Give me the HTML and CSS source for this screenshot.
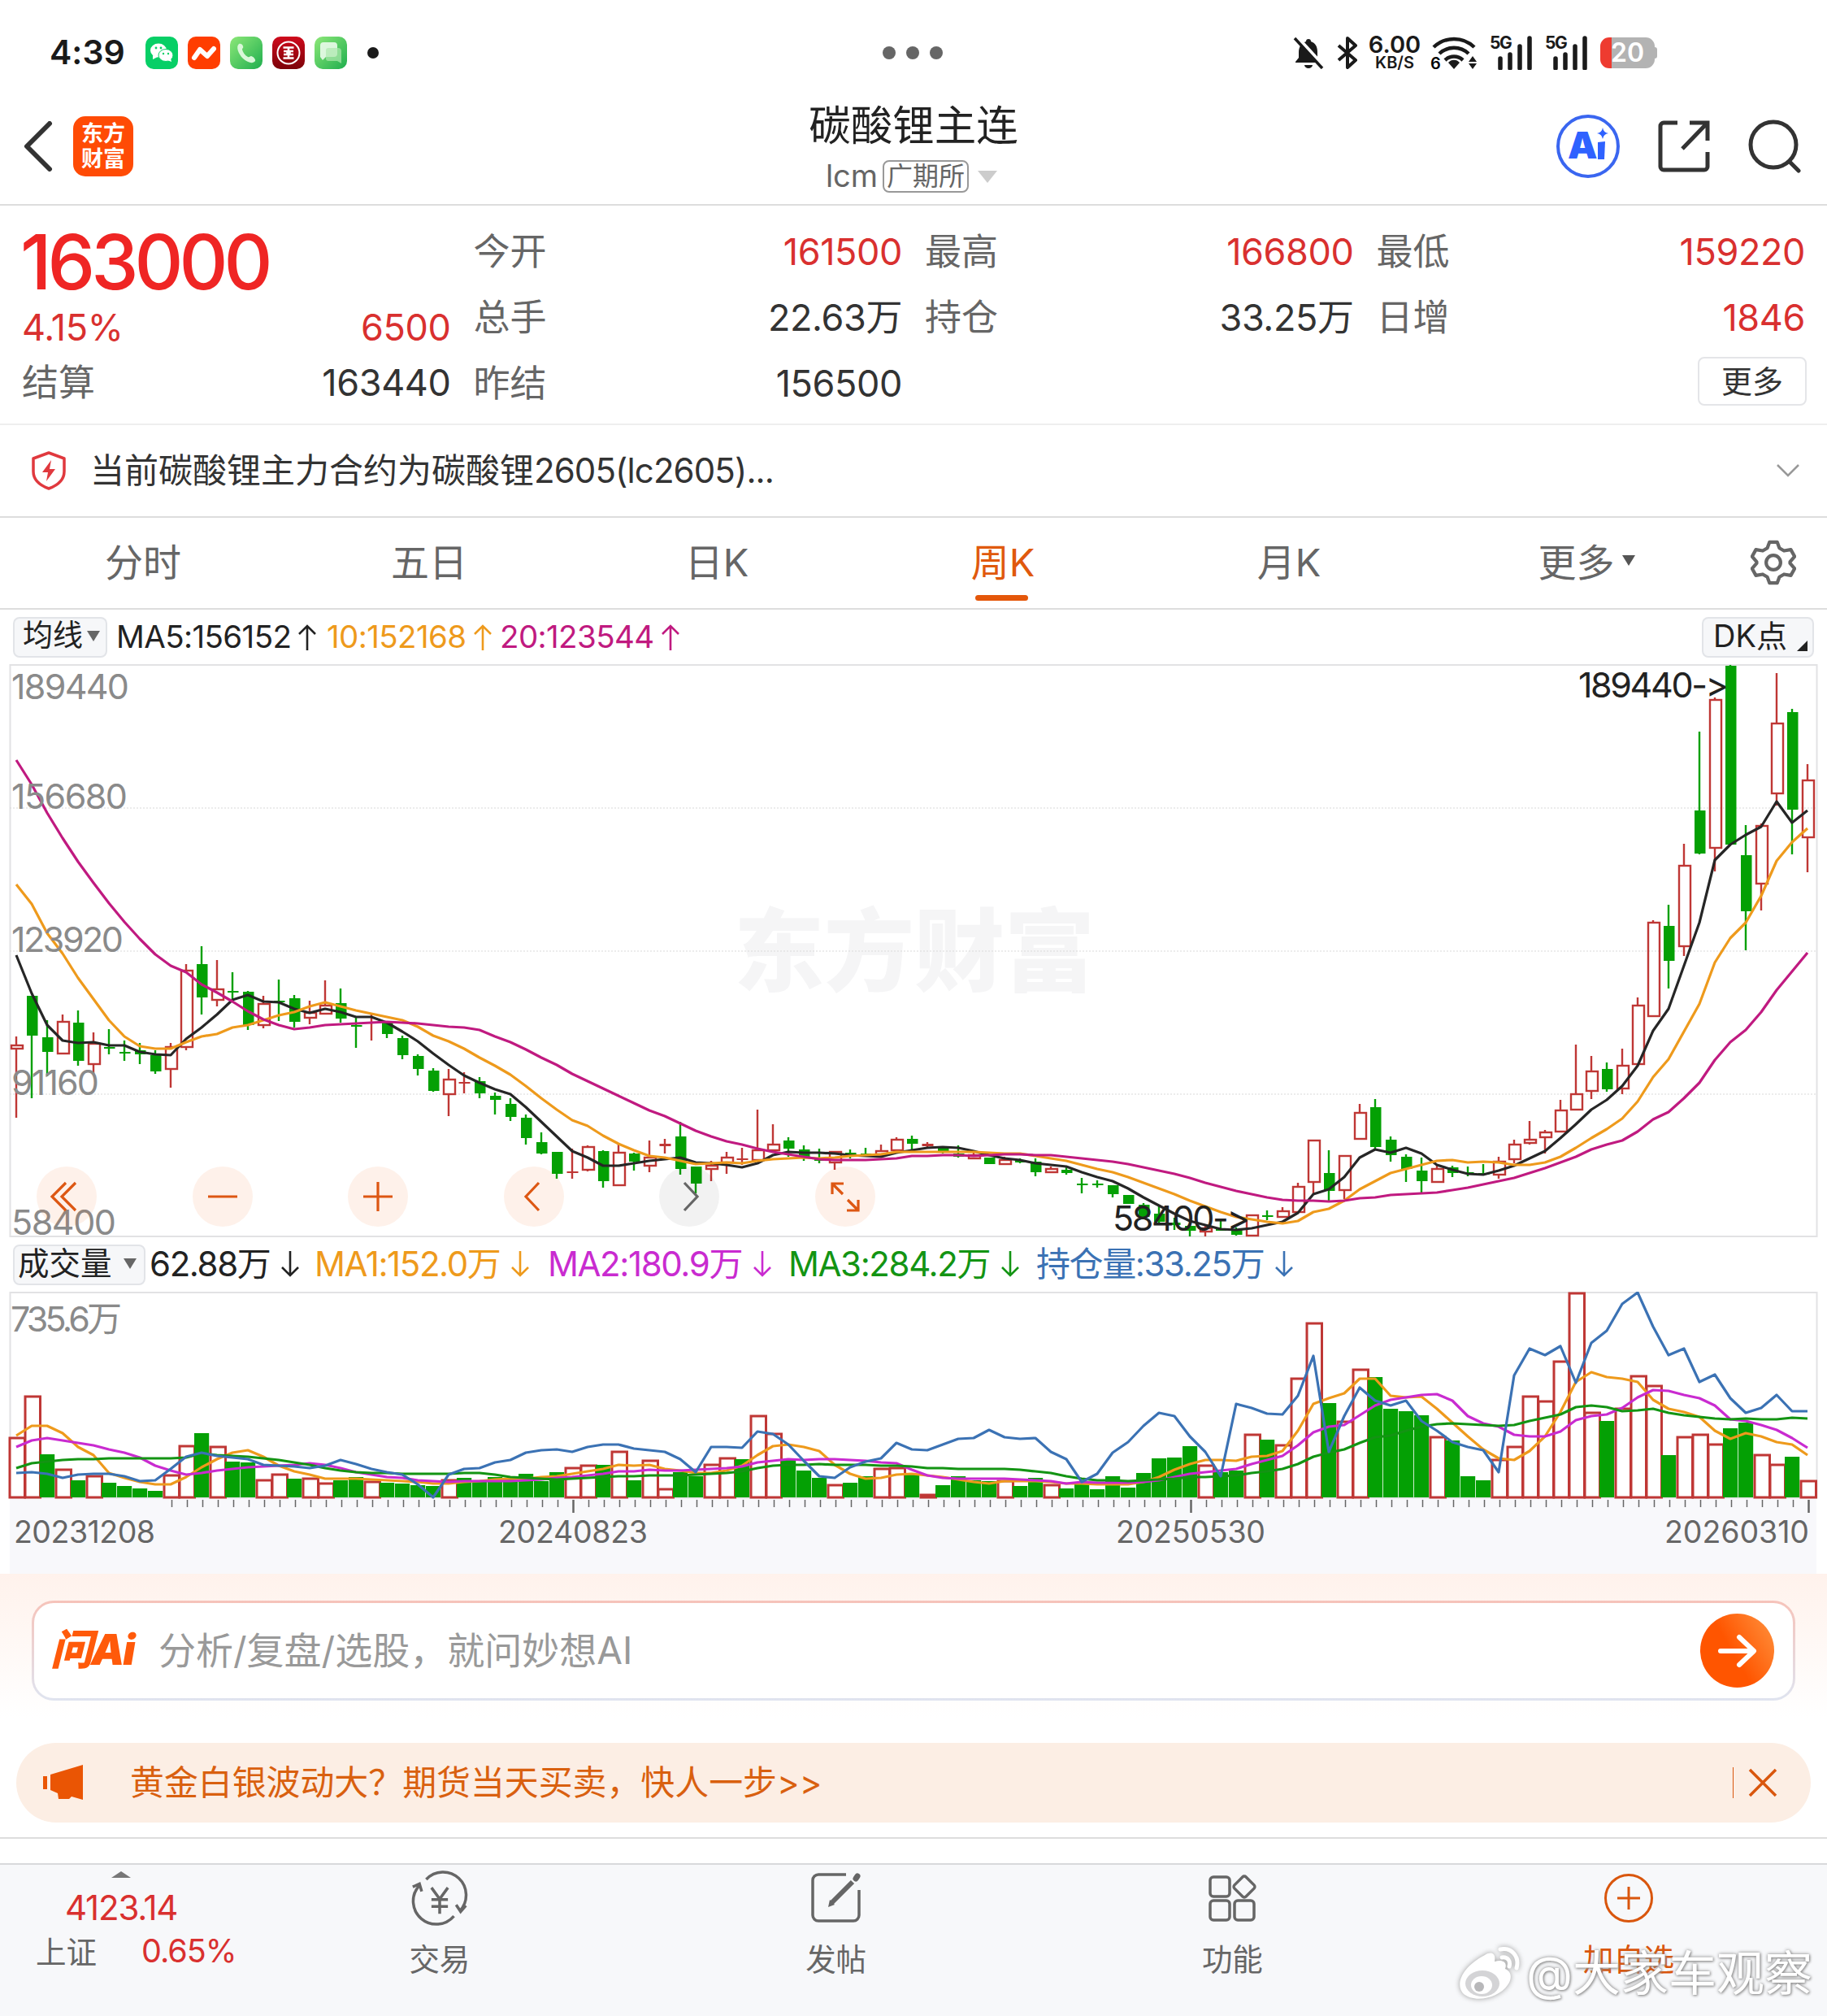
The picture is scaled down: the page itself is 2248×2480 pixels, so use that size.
FILE: index.html
```
<!DOCTYPE html>
<html lang="zh-CN">
<head>
    <meta charset="UTF-8">
    <meta name="viewport" content="width=device-width, initial-scale=1.0">
    <title>碳酸锂主连</title>
    <link rel="stylesheet" href="styles.css">
</head>
<body>
<svg class="defs" aria-hidden="true">
    <symbol id="up" viewBox="0 0 24 34"><path d="M12 33V3M2 13L12 3l10 10"/></symbol>
    <symbol id="down" viewBox="0 0 24 34"><path d="M12 1v30M2 21l10 10 10-10"/></symbol>
    <symbol id="signal" viewBox="0 0 52 42"><path d="M13 28v12M25 23v17M37 13v27M49 3v37" stroke="#1a1a1a" stroke-width="5.5" stroke-linecap="round"/></symbol>
</svg>
<div class="app">
    <div class="status">
        <span class="time">4:39</span>
        <div class="apps">
            <svg viewBox="0 0 40 40"><rect width="40" height="40" rx="10" fill="#07cf66"/><ellipse cx="16" cy="17" rx="10" ry="8.5" fill="#fff"/><path d="M9 23l0 5 6-3z" fill="#fff"/><ellipse cx="25" cy="23" rx="9" ry="7.5" fill="#fff" stroke="#07cf66" stroke-width="1"/><path d="M31 27l1 4-5-2z" fill="#fff"/><g fill="#07cf66"><circle cx="13" cy="14" r="1.4"/><circle cx="19" cy="14" r="1.4"/><circle cx="22" cy="21" r="1.2"/><circle cx="28" cy="21" r="1.2"/></g></svg>
            <svg viewBox="0 0 40 40"><rect width="40" height="40" rx="10" fill="#ff3d00"/><path d="M8 26l7-10 9 8 8-9" fill="none" stroke="#fff" stroke-width="6" stroke-linecap="round" stroke-linejoin="round"/></svg>
            <svg viewBox="0 0 40 40"><rect width="40" height="40" rx="10" fill="url(#lime)"/><path d="M11 9c-4 3-1 12 5 18 6 5 12 7 15 3 1-2-3-6-5-6-2 0-2 2-4 1-4-2-6-6-7-9 0-2 2-2 1-4 0-2-3-4-5-3z" fill="#d9f7d9"/></svg>
            <svg viewBox="0 0 40 40"><rect width="40" height="40" rx="10" fill="url(#wine)"/><g fill="none" stroke="#fff"><circle cx="20" cy="20" r="13.5" stroke-width="2"/><path d="M13.500 13.500h13M13.500 26.500h13M20 14v12M14 18h4.500v4H14M26 18h-4.500v4H26" stroke-width="2.600"/></g></svg>
            <svg viewBox="0 0 40 40"><rect width="40" height="40" rx="10" fill="url(#lime)"/><path d="M11 7h13a4 4 0 0 1 4 4v10a4 4 0 0 1-4 4H14l-4 4-3-4V11a4 4 0 0 1 4-4z" fill="#eafbea" opacity=".9"/><path d="M17 14h12a4 4 0 0 1 4 4v15l-5-3H17a3 3 0 0 1-3-3V17a3 3 0 0 1 3-3z" fill="#aee8ae" opacity=".7"/>
                <defs>
                    <linearGradient id="lime" x1="0" y1="0" x2="1" y2="1"><stop offset="0" stop-color="#8de878"/><stop offset="1" stop-color="#1fae4e"/></linearGradient>
                    <linearGradient id="wine" x1="0" y1="0" x2="0" y2="1"><stop offset="0" stop-color="#cf0a1c"/><stop offset="1" stop-color="#7c0208"/></linearGradient>
                </defs>
            </svg>
        </div>
        <i class="dot"></i>
        <div class="island"><i></i><i></i><i></i></div>
        <div class="sys">
            <svg class="bell" width="38" height="40" viewBox="0 0 38 40"><path d="M19 3a3 3 0 0 1 3 3c6 2 8 7 8 13v7l4 5v1H3v-1l4-5v-7C7 13 10 8 16 6a3 3 0 0 1 3-3zM14 35h10a5 4 0 0 1-10 0z" fill="#1a1a1a"/><path d="M5 1l33 36" stroke="#fff" stroke-width="5"/><path d="M2 2l34 37" stroke="#1a1a1a" stroke-width="3.5"/></svg>
            <svg class="bt" width="26" height="40" viewBox="0 0 26 40"><path d="M2 11l21 18-10 9V2l10 9L2 29" fill="none" stroke="#1a1a1a" stroke-width="4" stroke-linejoin="round"/></svg>
            <div class="speed"><b>6.00</b><span>KB/S</span></div>
            <svg class="wifi" width="58" height="42" viewBox="0 0 58 42"><g fill="none" stroke="#1a1a1a" stroke-width="4.500"><path d="M4 14a36 36 0 0 1 50 0"/><path d="M11 22a26 26 0 0 1 36 0"/><path d="M18 30a16 16 0 0 1 22 0"/></g><path d="M29 41l-7-8a9 9 0 0 1 14 0zM47 32l5-7 5 7zM47 34l5 7 5-7z" fill="#1a1a1a"/><text x="0" y="41" class="six">6</text></svg>
            <div class="sim"><svg width="52" height="42"><use href="#signal"/></svg><em>5G</em></div>
            <div class="sim"><svg width="52" height="42"><use href="#signal"/></svg><em>5G</em></div>
            <div class="battery">20</div><i class="cap"></i>
        </div>
    </div>

    <header>
        <svg class="back" width="36" height="62" viewBox="0 0 36 62"><path d="M32 3L4 31l28 28" fill="none" stroke="#333" stroke-width="6" stroke-linecap="round" stroke-linejoin="round"/></svg>
        <div class="logo">东方<br>财富</div>
        <div class="title">
            <h1>碳酸锂主连</h1>
            <div class="sub">lcm<span>广期所</span><i></i></div>
        </div>
        <div class="actions">
            <svg width="80" height="80" viewBox="0 0 80 80"><circle cx="40" cy="40" r="37" fill="none" stroke="#3a66f0" stroke-width="4"/><text x="15" y="55" class="ai">A</text><path d="M52 35l9-1-1 22h-8z" fill="#2f62ff"/><path d="M58 17q1 6 7 7-6 1-7 7-1-6-7-7 6-1 7-7z" fill="#2f62ff"/></svg>
            <svg width="64" height="66" viewBox="0 0 64 66"><path d="M24 4H7a4 4 0 0 0-4 4v50a4 4 0 0 0 4 4h50a4 4 0 0 0 4-4V40M39 4h22v22M60 5L30 36" fill="none" stroke="#333" stroke-width="5"/></svg>
            <svg width="66" height="68" viewBox="0 0 66 68"><circle cx="32" cy="32" r="28" fill="none" stroke="#333" stroke-width="5"/><path d="M52 53l11 11" stroke="#333" stroke-width="5" stroke-linecap="round"/></svg>
        </div>
    </header>

    <section class="quote">
        <div class="col first">
            <div class="price">163000</div>
            <div class="row red"><span>4.15%</span><span>6500</span></div>
            <div class="row"><label>结算</label><span>163440</span></div>
        </div>
        <div class="col">
            <div class="row"><label>今开</label><span class="red">161500</span></div>
            <div class="row"><label>总手</label><span>22.63万</span></div>
            <div class="row"><label>昨结</label><span>156500</span></div>
        </div>
        <div class="col">
            <div class="row"><label>最高</label><span class="red">166800</span></div>
            <div class="row"><label>持仓</label><span>33.25万</span></div>
        </div>
        <div class="col">
            <div class="row"><label>最低</label><span class="red">159220</span></div>
            <div class="row"><label>日增</label><span class="red">1846</span></div>
            <div class="row"><button class="more">更多</button></div>
        </div>
    </section>

    <div class="notice">
        <svg width="46" height="50" viewBox="0 0 46 50"><path d="M23 3l19 7v16c0 10-8 17-19 21C12 43 4 36 4 26V10z" fill="none" stroke="#e0393e" stroke-width="3.5" stroke-linejoin="round"/><path d="M26 12L15 27h7l-2 11 11-15h-7z" fill="#e0393e"/></svg>
        <p>当前碳酸锂主力合约为碳酸锂<span>2605(lc2605)...</span></p>
        <svg width="30" height="18" viewBox="0 0 30 18"><path d="M2 2l13 13L28 2" fill="none" stroke="#999" stroke-width="2.5"/></svg>
    </div>

    <nav class="tabs">
        <a>分时</a><a>五日</a><a>日K</a><a class="on">周K</a><a>月K</a><a class="drop">更多<i></i></a>
        <svg width="56" height="56" viewBox="0 0 60 60"><g fill="none" stroke="#666" stroke-width="4.5" stroke-linejoin="round"><path d="M25 3h10l3 8 6 3.500 9-1.500 5 9-6 7v2l6 7-5 9-9-1.500-6 3.500-3 8H25l-3-8-6-3.500-9 1.500-5-9 6-7v-2l-6-7 5-9 9 1.500 6-3.500z"/><circle cx="30" cy="30" r="9.5"/></g></svg>
    </nav>

    <div class="legend top">
        <span class="chip">均线<i class="tri"></i></span>
        <span class="ma5">MA5:156152<svg><use href="#up"/></svg></span>
        <span class="ma10 orange">10:152168<svg><use href="#up"/></svg></span>
        <span class="pink">20:123544<svg><use href="#up"/></svg></span>
        <span class="chip dk">DK点<i></i></span>
    </div>

    <div class="chart">
        <svg id="kline" width="2248" height="705" viewBox="0 817 2248 705"></svg>
        <div class="controls">
            <b><svg viewBox="0 0 74 74"><path d="M36 20L19 37l17 17M48 20L31 37l17 17"/></svg></b>
            <b><svg viewBox="0 0 74 74"><path d="M19 37h36"/></svg></b>
            <b><svg viewBox="0 0 74 74"><path d="M19 37h36M37 19v36"/></svg></b>
            <b><svg viewBox="0 0 74 74"><path d="M43 20L27 37l16 17"/></svg></b>
            <b class="off"><svg viewBox="0 0 74 74"><path d="M31 20l16 17-16 17"/></svg></b>
            <b><svg viewBox="0 0 74 74"><path d="M21 34V21h14M21 21l13 13M53 41v13H39M53 54L40 41"/></svg></b>
        </div>
    </div>

    <div class="legend vol">
        <span class="chip">成交量<i class="tri"></i></span>
        <span class="v0">62.88万<svg><use href="#down"/></svg></span>
        <span class="v1 orange">MA1:152.0万<svg><use href="#down"/></svg></span>
        <span class="v2 purple">MA2:180.9万<svg><use href="#down"/></svg></span>
        <span class="v3 green">MA3:284.2万<svg><use href="#down"/></svg></span>
        <span class="v4 blue">持仓量:33.25万<svg><use href="#down"/></svg></span>
    </div>

    <svg id="volume" width="2248" height="347" viewBox="0 1589 2248 347"></svg>

    <section class="ask">
        <div class="askbox">
            <span class="asklogo">问Ai</span>
            <span class="hint">分析/复盘/选股，就问妙想AI</span>
            <span class="go"><svg width="50" height="50" viewBox="0 0 50 50"><path d="M4 25h40M27 8l18 17-18 17" fill="none" stroke="#fff" stroke-width="6" stroke-linecap="round" stroke-linejoin="round"/></svg></span>
        </div>
    </section>

    <div class="promo">
        <svg width="52" height="44" viewBox="0 0 52 44"><path d="M1 14h5v16H1zM10 12L50 0v43l-14-4-3 3H20l-1-7-9-4z" fill="#ea5504"/></svg>
        <p>黄金白银波动大？期货当天买卖，快人一步&gt;&gt;</p>
        <i></i>
        <svg width="36" height="36" viewBox="0 0 36 36"><path d="M2 2l32 32M34 2L2 34" stroke="#d9560d" stroke-width="3.5"/></svg>
    </div>
    <div class="strip"></div>

    <footer>
        <div class="index">
            <i></i>
            <strong>4123.14</strong>
            <div><span>上证</span><em>0.65%</em></div>
        </div>
        <a>
            <svg width="70" height="64" viewBox="0 0 76 70"><g fill="none" stroke="#666" stroke-width="3.8"><path d="M20 10a30 30 0 0 1 45 42M57 59A30 30 0 0 1 10 19M2 20l9-4 3 10M73 45l-7 8-6-9M27 21l11 15 11-15M38 36v20M27 37h22M27 46h22"/></g></svg>
            交易
        </a>
        <a>
            <svg width="64" height="64" viewBox="0 0 64 64"><path d="M44 3H10a7 7 0 0 0-7 7v43a7 7 0 0 0 7 7h43a7 7 0 0 0 7-7V22" fill="none" stroke="#666" stroke-width="3.5"/><path d="M52 12L26 38" stroke="#666" stroke-width="6"/><path d="M24 34l-2 9 8-3z" fill="#666"/><path d="M56 8l2-3" stroke="#666" stroke-width="7" stroke-linecap="round"/></svg>
            发帖
        </a>
        <a>
            <svg width="60" height="62" viewBox="0 0 60 62"><g fill="none" stroke="#666" stroke-width="3.5"><rect x="3" y="5" width="24" height="24" rx="4"/><rect x="3" y="34" width="24" height="24" rx="4"/><rect x="33" y="34" width="24" height="24" rx="4"/><rect x="35" y="7" width="20" height="20" rx="3" transform="rotate(45 45 17)"/></g></svg>
            功能
        </a>
        <a class="add">
            <svg width="62" height="62" viewBox="0 0 62 62"><circle cx="31" cy="31" r="28.5" fill="none" stroke="#d9560d" stroke-width="3"/><path d="M17 31h28M31 17v28" stroke="#d9560d" stroke-width="3"/></svg>
            加自选
        </a>
    </footer>

    <div class="mark">
        <svg width="80" height="68" viewBox="0 0 80 68"><path d="M35 10c8-5 14-2 12 8 10-3 16 1 13 9 8 3 9 12 3 20C52 63 22 70 8 57-2 45 8 24 35 10z" fill="#fff"/><ellipse cx="32" cy="45" rx="21" ry="16" fill="#d4d4d6"/><ellipse cx="31" cy="47" rx="13" ry="11" fill="#fff"/><circle cx="28" cy="49" r="6" fill="#b8b8ba"/><path d="M54 3c14-3 24 9 20 23M56 13c7-1 11 4 9 11" fill="none" stroke="#fff" stroke-width="5" stroke-linecap="round"/></svg>
        <span>@大家车观察</span>
    </div>
</div>
<script src="chart.js"></script>
</body>
</html>
```
FILE: styles.css
```
* {
    box-sizing: border-box;
}

body {
    margin: 0;
    background: #fff;
    color: #333;
    font-family: Inter, "Noto Sans CJK SC", sans-serif;
    font-feature-settings: "calt" 0;
    line-height: 1.2;
}

.defs {
    position: absolute;
    width: 0;
    height: 0;
}

.app {
    position: relative;
    width: 2248px;
    height: 2480px;
    overflow: hidden;
    display: flex;
    flex-direction: column;
}

.app > * {
    flex-shrink: 0;
}

i, em {
    font-style: normal;
}

.red {
    color: #d9302f;
}

.orange {
    color: #ee9a1c;
}

.pink {
    color: #c01a80;
}

.purple {
    color: #c92bd0;
}

.green {
    color: #139413;
}

.blue {
    color: #3b72b4;
}

/* status bar */
.status {
    position: relative;
    display: flex;
    align-items: center;
    height: 130px;
    padding: 0 209px 0 61px;
    color: #1a1a1a;
}

.time {
    width: 118px;
    font-size: 41px;
    font-weight: 600;
}

.apps {
    display: flex;
    gap: 12px;
}

.apps svg {
    width: 40px;
    height: 40px;
}

.dot {
    width: 14px;
    height: 14px;
    margin-left: 25px;
    border-radius: 50%;
    background: #1a1a1a;
}

.island {
    position: absolute;
    left: 1086px;
    display: flex;
    gap: 13px;
}

.island i {
    width: 16px;
    height: 16px;
    border-radius: 50%;
    background: #666;
}

.sys {
    display: flex;
    align-items: center;
    margin-left: auto;
}

.bt {
    margin: 0 11px 0 16px;
}

.speed {
    display: flex;
    flex-direction: column;
    align-items: center;
    width: 68px;
    line-height: 1;
}

.speed b {
    font-size: 29px;
    font-weight: 600;
    line-height: 24px;
}

.speed span {
    font-size: 20px;
    font-weight: 600;
    line-height: 20px;
}

.wifi {
    margin: 0 15px 0 10px;
}

.six {
    font-size: 20px;
    font-weight: 600;
}

.sim {
    position: relative;
    width: 52px;
    height: 42px;
    margin-right: 16px;
}

.sim em {
    position: absolute;
    left: 0;
    top: -2px;
    font-size: 21px;
    line-height: 22px;
    font-weight: 700;
    letter-spacing: -1.5px;
}

.battery {
    width: 67px;
    height: 38px;
    border-radius: 11px;
    background: linear-gradient(90deg, #ee3b30 14px, #b3b3b3 14px);
    color: #fff;
    font-size: 32px;
    font-weight: 600;
    line-height: 38px;
    text-align: center;
}

.cap {
    width: 3px;
    height: 14px;
    border-radius: 0 3px 3px 0;
    background: #b3b3b3;
}

/* header */
header {
    position: relative;
    display: flex;
    align-items: center;
    height: 123px;
    padding: 0 32px 22px 29px;
    border-bottom: 2px solid #ddd;
}

.logo {
    width: 74px;
    height: 74px;
    margin-left: 25px;
    padding-top: 6px;
    border-radius: 15px;
    background: #ff4b05;
    color: #fff;
    font-size: 27px;
    line-height: 31px;
    font-weight: 700;
    text-align: center;
}

.title {
    position: absolute;
    left: 0;
    right: 0;
    top: -6px;
    text-align: center;
}

h1 {
    margin: 0;
    font-size: 51.5px;
    line-height: 60px;
    font-weight: 400;
    color: #222;
}

.sub {
    display: flex;
    align-items: center;
    justify-content: center;
    height: 66px;
    padding-right: 5px;
    font-size: 38px;
    color: #666;
}

.sub span {
    height: 40px;
    margin-left: 6px;
    padding: 0 3px;
    border: 2px solid #999;
    border-radius: 8px;
    font-size: 32px;
    line-height: 36px;
}

.sub i {
    margin-left: 11px;
    border: 12px solid transparent;
    border-top: 15px solid #ccc;
    border-bottom: 0;
}

.actions {
    display: flex;
    align-items: center;
    gap: 46px;
    margin-left: auto;
}

.ai {
    font-size: 46px;
    font-weight: 900;
    fill: #2f62ff;
}

/* quote */
.quote {
    display: flex;
    gap: 28px;
    height: 270px;
    padding: 16px 27px 0;
    border-bottom: 2px solid #eee;
    font-size: 45px;
}

.col {
    flex: 1;
}

.row {
    display: flex;
    align-items: center;
    justify-content: space-between;
    height: 81px;
    letter-spacing: -0.4px;
}

.row label {
    color: #666;
    letter-spacing: 0;
}

.price {
    height: 107px;
    margin-left: -2px;
    line-height: 107px;
    font-size: 93px;
    font-weight: 500;
    letter-spacing: -5px;
    color: #ef2524;
}

.first .row {
    height: 55px;
}

.first .red {
    height: 53px;
}

.first .row:last-child {
    height: 83px;
}

.more {
    width: 134px;
    height: 60px;
    margin: -5px -2px 0 auto;
    padding: 0;
    border: 2px solid #e4e5e8;
    border-radius: 8px;
    background: #fff;
    color: #333;
    font-family: inherit;
    font-size: 38px;
    line-height: 54px;
}

.notice {
    display: flex;
    align-items: center;
    height: 114px;
    padding: 0 33px 0 37px;
    border-bottom: 2px solid #ddd;
    font-size: 42px;
}

.notice p {
    flex: 1;
    margin: 0 0 0 28px;
}

.notice span {
    letter-spacing: -0.9px;
}

/* period tabs */
.tabs {
    display: flex;
    align-items: center;
    height: 113px;
    border-bottom: 2px solid #ddd;
    font-size: 47px;
    color: #666;
}

.tabs a {
    position: relative;
    width: 352px;
    text-align: center;
}

.tabs a:nth-child(n+3) {
    left: 2px;
}

.tabs > svg {
    margin: -2px 0 0 42px;
}

.tabs .on {
    color: #e0590d;
}

.on::after {
    content: "";
    position: absolute;
    left: 142px;
    bottom: -18px;
    width: 65px;
    height: 7px;
    border-radius: 4px;
    background: #e4570a;
}

.drop {
    padding-left: 28px;
}

.drop i {
    display: inline-block;
    margin: 0 0 13px 9px;
    border: 8px solid transparent;
    border-top: 13px solid #555;
    border-bottom: 0;
}

/* legends */
.legend {
    display: flex;
    align-items: center;
    height: 67px;
    padding-left: 16px;
    font-size: 38.5px;
    white-space: nowrap;
    color: #222;
}

.legend span {
    display: flex;
    align-items: center;
    letter-spacing: -0.6px;
}

.legend svg {
    width: 24px;
    height: 34px;
    margin-left: 8px;
    fill: none;
    stroke: currentColor;
    stroke-width: 2.6;
}

.legend .chip {
    height: 50px;
    padding: 0 7px 2px 10px;
    border: 2px solid #e2e4e8;
    border-radius: 8px;
    background: #f6f7f9;
    font-size: 37px;
    letter-spacing: 0;
}

.tri {
    margin-left: 5px;
    border: 8px solid transparent;
    border-top: 13px solid #666;
    border-bottom: 0;
}

.ma5 {
    width: 259px;
    margin-left: 11px;
}

.ma10 {
    width: 213px;
}

.legend .dk {
    position: relative;
    width: 138px;
    padding-left: 12px;
    margin: 0 16px 0 auto;
    font-size: 38px;
}

.dk i {
    position: absolute;
    right: 6px;
    bottom: 6px;
    border-left: 13px solid transparent;
    border-bottom: 13px solid #222;
}

.vol {
    font-size: 42px;
}

.vol span {
    letter-spacing: -1.4px;
}

.vol .chip {
    width: 163px;
    padding-left: 4px;
    font-size: 38.5px;
}

.vol .tri {
    margin-left: 14px;
}

.v0 {
    width: 203px;
    margin-left: 5px;
}

.v1 {
    width: 287px;
}

.v2 {
    width: 296px;
}

.v3 {
    width: 305px;
}

.vol svg {
    margin-left: 13px;
}

/* charts */
.chart {
    position: relative;
    height: 705px;
}

#kline, #volume {
    display: block;
}

.scale {
    font-size: 43px;
    fill: #8a8a8a;
}

.peak {
    font-size: 43px;
    fill: #222;
}

.axis {
    font-size: 37.5px;
    fill: #666;
}

.brand {
    font-size: 111px;
    font-weight: 900;
    fill: #f5f5f6;
}

.controls {
    position: absolute;
    left: 45px;
    bottom: 13px;
    display: flex;
    gap: 117.6px;
}

.controls b {
    width: 74px;
    height: 74px;
    border-radius: 50%;
    background: rgba(240, 90, 10, 0.085);
}

.controls svg {
    display: block;
    fill: none;
    stroke: #dd5713;
    stroke-width: 3.2;
}

.controls .off {
    background: rgba(0, 0, 0, 0.05);
}

.controls .off svg {
    stroke: #666;
}

/* AI question box */
.ask {
    height: 208px;
    padding: 33px 39px 0;
    background: linear-gradient(#fff2ec, #fff 85%);
}

.askbox {
    display: flex;
    align-items: center;
    height: 123px;
    padding: 0 23px 0 20px;
    border: 3px solid transparent;
    border-radius: 27px;
    background: linear-gradient(#fff, #fff) padding-box, linear-gradient(#f6c3ba, #dfe4f0) border-box;
}

.asklogo {
    width: 133px;
    font-size: 52px;
    font-weight: 900;
    font-style: italic;
    letter-spacing: -2px;
    color: #ff5a0a;
}

.hint {
    flex: 1;
    font-size: 46px;
    color: #999;
}

.go {
    display: flex;
    align-items: center;
    justify-content: center;
    width: 91px;
    height: 91px;
    border-radius: 50%;
    background: linear-gradient(60deg, #ff5500 45%, #ff9440);
}

.promo {
    display: flex;
    align-items: center;
    height: 98px;
    margin: 0 20px;
    padding: 0 41px 0 32px;
    border-radius: 49px;
    background: #fceee4;
    color: #d9600f;
}

.promo p {
    flex: 1;
    margin: 0 0 0 56px;
    font-size: 41.9px;
}

.promo i {
    width: 1px;
    height: 38px;
    margin-right: 18px;
    background: #d9560d;
}

.strip {
    height: 32px;
    margin-top: 18px;
    border-top: 2px solid #ddd;
}

/* bottom bar */
footer {
    display: flex;
    flex: 1;
    border-top: 2px solid #d8d9db;
    background: #f7f8fa;
    font-size: 37.5px;
    color: #666;
}

.index {
    width: 297px;
    padding-top: 8px;
}

.index i {
    display: block;
    width: 24px;
    margin-left: 137px;
    border: 12px solid transparent;
    border-bottom: 8px solid #777;
    border-top: 0;
}

.index strong {
    display: block;
    padding-left: 80px;
    padding-top: 12px;
    font-size: 42px;
    line-height: 50px;
    font-weight: 400;
    letter-spacing: -1.2px;
    color: #d9302f;
}

.index div {
    display: flex;
    align-items: center;
    height: 58px;
    padding-left: 44px;
}

.index em {
    margin-left: 55px;
    font-size: 39.5px;
    letter-spacing: -1px;
    color: #d9302f;
}

footer a {
    flex: 1;
    display: flex;
    flex-direction: column;
    align-items: center;
    line-height: 44px;
}

footer a svg {
    height: 72px;
    margin: 5px 0 18px;
}

footer .add {
    color: #d9560d;
}

.mark {
    position: absolute;
    left: 1792px;
    bottom: 16px;
    display: flex;
    align-items: center;
    gap: 6px;
    font-size: 59px;
    color: #fff;
    text-shadow: 0 0 4px #888, 1px 1px 3px #999;
}

.mark svg {
    filter: drop-shadow(0 0 3px #999);
}
```
FILE: chart.js
```
// colour, high, low, body top, body bottom
const candles = [
    ['r',1275,1375,1286,1290],['g',1225,1351,1225,1274],['g',1255,1324,1276,1294],['r',1248,1297,1257,1296],['g',1243,1311,1258,1305],
    ['r',1270,1322,1284,1309],['g',1266,1297,1288,1290],['g',1280,1305,1294,1296],['g',1283,1309,1292,1297],['g',1292,1321,1298,1318],
    ['r',1283,1338,1288,1315],['r',1186,1292,1194,1288],['g',1164,1248,1186,1227],['r',1181,1238,1217,1230],['g',1196,1229,1219,1221],
    ['g',1219,1267,1220,1261],['r',1225,1265,1235,1261],['g',1205,1256,1231,1233],['g',1224,1264,1228,1257],['r',1231,1260,1246,1252],
    ['r',1206,1248,1237,1247],['g',1216,1258,1234,1253],['g',1252,1289,1261,1263],['r',1246,1280,1257,1259],['g',1256,1277,1258,1272],
    ['g',1274,1303,1277,1298],['g',1297,1323,1299,1315],['g',1314,1343,1317,1342],['r',1315,1373,1328,1346],['r',1319,1345,1331,1333],
    ['g',1325,1351,1330,1345],['g',1344,1371,1348,1353],['g',1351,1379,1358,1374],['g',1371,1408,1375,1400],['g',1393,1420,1405,1419],
    ['g',1417,1450,1417,1444],['r',1413,1450,1441,1443],['r',1409,1441,1411,1439],['g',1415,1461,1416,1453],['r',1408,1459,1418,1458],
    ['g',1418,1440,1419,1429],['r',1403,1442,1424,1434],['r',1401,1419,1407,1410],['g',1380,1445,1398,1438],['g',1435,1468,1435,1456],
    ['r',1428,1453,1434,1438],['r',1417,1444,1424,1430],['r',1412,1433,1425,1427],['r',1365,1428,1415,1427],['r',1383,1416,1408,1415],
    ['g',1399,1423,1403,1413],['g',1409,1428,1414,1424],['g',1413,1431,1426,1428],['r',1417,1439,1417,1430],['g',1414,1425,1418,1423],
    ['g',1412,1423,1419,1421],['r',1408,1422,1416,1420],['r',1399,1415,1402,1415],['g',1397,1418,1401,1407],['r',1405,1412,1407,1410],
    ['g',1411,1419,1412,1416],['g',1409,1424,1419,1423],['r',1418,1425,1421,1425],['g',1424,1432,1424,1432],['r',1423,1433,1427,1432],
    ['g',1425,1431,1427,1430],['g',1425,1447,1429,1442],['r',1435,1442,1438,1442],['g',1434,1445,1439,1443],['g',1449,1468,1456,1458],
    ['g',1452,1461,1456,1458],['g',1458,1473,1458,1469],['g',1470,1481,1470,1481],['g',1480,1499,1482,1497],['g',1483,1504,1493,1503],
    ['g',1498,1513,1504,1507],['g',1507,1521,1508,1514],['r',1508,1521,1511,1515],['g',1502,1514,1512,1514],['g',1510,1520,1513,1519],
    ['r',1495,1521,1495,1520],['g',1489,1501,1495,1497],['r',1485,1498,1490,1497],['r',1455,1492,1460,1491],['r',1403,1468,1403,1454],
    ['g',1415,1477,1443,1465],['r',1422,1475,1422,1464],['r',1358,1401,1369,1401],['g',1352,1415,1362,1411],['g',1398,1429,1402,1421],
    ['g',1420,1454,1423,1438],['g',1424,1468,1440,1453],['r',1432,1455,1438,1454],['g',1434,1448,1436,1443],['g',1435,1447,1442,1444],
    ['g',1432,1446,1443,1445],['r',1423,1450,1429,1445],['r',1402,1431,1408,1426],['r',1379,1408,1402,1406],['r',1390,1419,1393,1399],
    ['r',1353,1393,1366,1392],['r',1285,1366,1346,1365],['r',1299,1352,1318,1342],['g',1307,1343,1315,1340],['r',1290,1346,1311,1339],
    ['r',1227,1309,1237,1309],['r',1132,1250,1135,1250],['g',1113,1216,1139,1182],['r',1038,1176,1065,1164],['g',900,1051,997,1050],
    ['r',858,1072,861,1043],['g',818,1039,819,1039],['g',1015,1169,1052,1121],['r',1013,1120,1016,1087],['r',828,991,890,976],
    ['g',872,1051,876,996],['r',940,1073,960,1030]
];

const ma5 = [1175,1222,1261,1280,1283,1282,1286,1286,1294,1297,1298,1278,1264,1248,1230,1224,1232,1233,1241,1246,1241,1245,1251,1251,1258,1269,1281,1296,1310,1323,1332,1340,1346,1362,1380,1398,1416,1424,1434,1434,1431,1428,1426,1424,1430,1431,1433,1436,1431,1421,1417,1418,1418,1419,1421,1422,1423,1418,1415,1412,1411,1412,1416,1421,1425,1427,1431,1433,1435,1442,1448,1453,1462,1473,1483,1493,1502,1507,1512,1513,1511,1507,1503,1492,1469,1463,1448,1424,1414,1418,1412,1419,1433,1439,1444,1445,1440,1434,1425,1416,1400,1383,1365,1353,1336,1311,1268,1241,1188,1135,1058,1039,1027,1017,986,1012,997];
const ma10 = [1088,1112,1148,1173,1203,1229,1255,1275,1287,1290,1290,1282,1275,1272,1264,1261,1255,1249,1245,1238,1233,1238,1243,1247,1251,1255,1263,1274,1281,1290,1301,1311,1322,1336,1351,1365,1378,1385,1397,1407,1415,1422,1424,1428,1432,1431,1430,1431,1428,1426,1425,1424,1425,1424,1422,1421,1420,1417,1417,1417,1417,1417,1417,1418,1419,1419,1422,1425,1428,1433,1438,1442,1448,1455,1462,1469,1477,1484,1491,1497,1500,1503,1505,1502,1491,1487,1477,1463,1453,1443,1438,1433,1428,1427,1430,1429,1430,1433,1433,1430,1423,1412,1400,1389,1376,1355,1325,1303,1269,1235,1184,1154,1135,1102,1059,1036,1019];
const ma20 = [935,965,1000,1031,1060,1086,1111,1134,1155,1174,1188,1196,1211,1221,1232,1244,1254,1261,1266,1264,1261,1260,1259,1258,1257,1258,1259,1261,1263,1264,1267,1275,1282,1291,1301,1310,1321,1330,1339,1348,1357,1366,1373,1382,1391,1398,1404,1408,1413,1417,1420,1423,1426,1427,1427,1427,1426,1425,1422,1422,1421,1421,1422,1421,1420,1420,1421,1421,1423,1425,1427,1429,1432,1436,1440,1444,1449,1455,1460,1465,1469,1473,1476,1477,1477,1478,1477,1474,1473,1470,1469,1468,1467,1464,1461,1457,1453,1449,1443,1437,1430,1423,1414,1408,1403,1392,1377,1368,1351,1332,1304,1282,1267,1245,1218,1195,1172];

const bars = [1768,1717,1789,1807,1821,1815,1824,1828,1831,1834,1814,1778,1763,1779,1798,1799,1820,1813,1819,1818,1824,1821,1817,1822,1824,1825,1827,1828,1820,1818,1823,1817,1820,1813,1822,1811,1805,1802,1802,1785,1821,1796,1831,1811,1816,1801,1793,1795,1741,1763,1795,1809,1818,1826,1824,1816,1806,1805,1813,1838,1827,1816,1821,1822,1821,1828,1818,1826,1831,1826,1832,1816,1830,1812,1794,1793,1779,1802,1811,1809,1764,1771,1777,1695,1627,1726,1748,1684,1694,1733,1736,1741,1767,1772,1816,1821,1795,1779,1717,1723,1674,1590,1737,1748,1732,1692,1704,1790,1767,1764,1776,1757,1750,1789,1801,1792,1821];
// weeks whose volume bar is hollow
const hollow = [0,1,3,5,10,11,13,16,17,19,20,23,28,36,37,39,41,42,45,46,48,49,53,56,57,59,64,67,77,80,82,83,84,86,87,92,96,97,98,99,100,101,102,104,105,106,108,109,110,113,114,116];
const vol5 = [1766,1754,1754,1763,1780,1790,1812,1818,1823,1826,1826,1817,1805,1795,1787,1784,1792,1803,1810,1814,1819,1819,1819,1820,1821,1822,1823,1825,1825,1823,1822,1820,1819,1819,1817,1816,1813,1810,1807,1802,1803,1802,1807,1809,1812,1812,1809,1803,1790,1779,1777,1780,1785,1802,1813,1819,1818,1814,1813,1815,1817,1820,1823,1825,1822,1822,1822,1823,1825,1825,1826,1826,1826,1823,1817,1808,1801,1796,1796,1797,1792,1791,1785,1760,1727,1720,1714,1696,1696,1717,1719,1718,1733,1750,1767,1783,1794,1796,1785,1767,1737,1700,1688,1694,1696,1700,1722,1733,1737,1743,1760,1770,1763,1767,1774,1777,1790];
const vol10 = [1780,1772,1769,1772,1775,1778,1783,1787,1793,1803,1809,1814,1812,1809,1807,1805,1804,1803,1802,1800,1802,1806,1811,1814,1817,1818,1821,1822,1823,1822,1822,1822,1822,1821,1820,1818,1817,1815,1813,1810,1810,1808,1809,1809,1808,1807,1806,1804,1799,1797,1795,1796,1795,1795,1796,1797,1799,1800,1808,1815,1818,1819,1819,1819,1819,1820,1821,1822,1825,1823,1824,1824,1824,1823,1821,1817,1813,1811,1809,1807,1801,1796,1791,1778,1762,1755,1753,1741,1729,1722,1719,1716,1715,1723,1742,1751,1755,1765,1767,1767,1761,1747,1742,1740,1732,1719,1710,1711,1716,1720,1729,1746,1748,1753,1759,1769,1781];
const vol20 = [1806,1800,1798,1796,1795,1795,1794,1794,1794,1794,1794,1793,1788,1790,1791,1792,1794,1796,1799,1802,1806,1809,1811,1812,1812,1813,1813,1813,1813,1812,1812,1814,1817,1818,1819,1820,1819,1818,1817,1816,1816,1815,1815,1815,1814,1813,1812,1810,1806,1803,1802,1802,1801,1802,1802,1802,1803,1803,1804,1806,1806,1807,1807,1807,1807,1808,1810,1812,1816,1819,1821,1821,1822,1821,1820,1819,1817,1817,1816,1815,1812,1810,1807,1801,1792,1787,1783,1775,1768,1766,1760,1755,1752,1751,1752,1753,1754,1753,1748,1744,1740,1731,1729,1731,1736,1735,1733,1738,1741,1743,1745,1746,1745,1746,1746,1744,1745];
const oi = [1812,1811,1813,1818,1814,1813,1813,1816,1822,1821,1807,1792,1787,1791,1793,1795,1802,1803,1804,1806,1803,1796,1801,1807,1811,1814,1826,1842,1814,1807,1806,1799,1796,1787,1784,1783,1786,1780,1777,1777,1782,1784,1786,1795,1811,1780,1780,1781,1761,1764,1777,1797,1816,1818,1805,1798,1794,1775,1783,1784,1777,1770,1769,1759,1768,1770,1769,1786,1795,1823,1813,1787,1774,1754,1738,1742,1767,1786,1816,1727,1732,1739,1740,1717,1668,1786,1742,1707,1723,1729,1723,1748,1760,1774,1780,1784,1811,1692,1659,1667,1656,1701,1652,1637,1604,1590,1632,1667,1659,1700,1691,1720,1738,1732,1716,1736,1736];

const RED = '#bf3735';
const GREEN = '#04a004';
const px = i => 20 + i * 19;

function line(data, color, width) {
    const pts = data.map((y, i) => px(i) + ',' + y).join(' ');
    return `<polyline points="${pts}" fill="none" stroke="${color}" stroke-width="${width}" stroke-linejoin="round"/>`;
}

function text(x, y, cls, str, len) {
    return `<text x="${x}" y="${y}" class="${cls}" textLength="${len}">${str}</text>`;
}

function drawKline() {
    let s = '<rect x="12.5" y="818" width="2223" height="703" fill="none" stroke="#e2e2e4" stroke-width="2"/>';
    s += text(903, 1211, 'brand', '东方财富', 444);
    [994, 1170, 1346].forEach(y => {
        s += `<path d="M12 ${y}H2235" stroke="#d9d9d9" stroke-dasharray="2 2"/>`;
    });
    candles.forEach(([c, hi, lo, top, bottom], i) => {
        const x = px(i);
        const h = bottom - top;
        if (c === 'g') {
            s += `<path d="M${x} ${hi}V${lo}" stroke="${GREEN}" stroke-width="2.4"/>`;
            s += `<rect x="${x - 6}" y="${top}" width="13.5" height="${h}" fill="${GREEN}"/>`;
        } else {
            s += `<path d="M${x} ${hi}V${top}M${x} ${bottom}V${lo}" stroke="${RED}" stroke-width="2.4"/>`;
            if (h < 4) {
                s += `<rect x="${x - 6.5}" y="${top}" width="14" height="${h}" fill="${RED}"/>`;
            } else {
                s += `<rect x="${x - 6}" y="${top}" width="14" height="${h}" fill="none" stroke="${RED}" stroke-width="2.4"/>`;
            }
        }
    });
    s += line(ma5, '#262626', 3.2) + line(ma10, '#ee9a1c', 3.2) + line(ma20, '#c01a80', 3.2);
    s += text(14, 860, 'scale', '189440', 145);
    s += text(14, 995, 'scale', '156680', 143);
    s += text(14, 1171, 'scale', '123920', 138);
    s += text(14, 1347, 'scale', '91160', 108);
    s += text(14, 1519, 'scale', '58400', 129);
    s += text(1942, 858, 'peak', '189440-&gt;', 185);
    s += text(1369, 1514, 'peak', '58400-&gt;', 169);
    document.getElementById('kline').innerHTML = s;
}

function drawVolume() {
    let s = '<rect x="12" y="1843" width="2223" height="93" fill="#f8f8fb"/>';
    s += '<rect x="12.5" y="1590" width="2223" height="252.5" fill="none" stroke="#e2e2e4" stroke-width="2"/>';
    bars.forEach((y, i) => {
        const x = px(i);
        if (hollow.includes(i)) {
            s += `<rect x="${x - 8}" y="${y + 1}" width="18.5" height="${1841 - y}" fill="#fff" stroke="${RED}" stroke-width="3"/>`;
        } else {
            s += `<rect x="${x - 9}" y="${y}" width="18.2" height="${1842 - y}" fill="${GREEN}"/>`;
        }
    });
    s += line(vol5, '#ee9a1c', 3.2) + line(vol10, '#c92bd0', 3.2) + line(vol20, '#139413', 3.2) + line(oi, '#3b72b4', 3.2);
    for (let i = 10; i < 117; i++) {
        const major = i === 36 || i === 76 || i === 116;
        s += `<path d="M${px(i) + 1.5} 1845V${major ? 1861 : 1854}" stroke="#666" stroke-width="${major ? 2.5 : 1.5}"/>`;
    }
    s += text(13, 1638, 'scale', '735.6万', 137);
    s += text(17, 1898, 'axis', '20231208', 174);
    s += text(613, 1898, 'axis', '20240823', 184);
    s += text(1373, 1898, 'axis', '20250530', 184);
    s += text(2048, 1898, 'axis', '20260310', 178);
    document.getElementById('volume').innerHTML = s;
}

drawKline();
drawVolume();
```
